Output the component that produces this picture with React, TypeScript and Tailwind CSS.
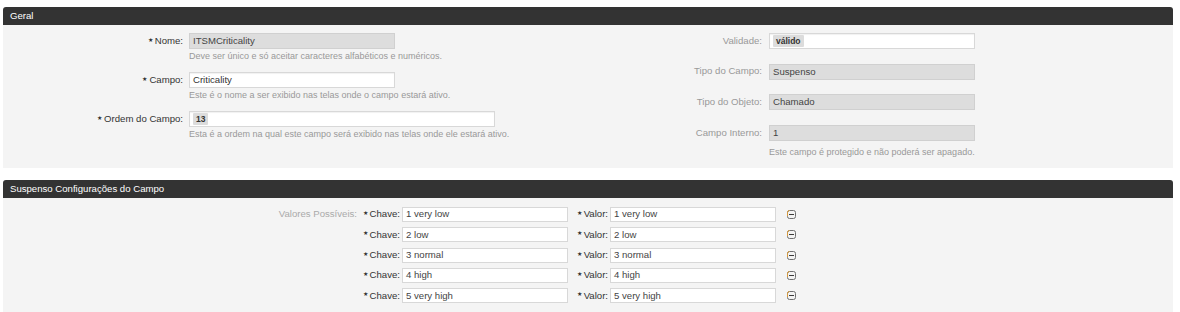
import { ReactNode } from 'react';

const rows = [
  ['1 very low', '1 very low'],
  ['2 low', '2 low'],
  ['3 normal', '3 normal'],
  ['4 high', '4 high'],
  ['5 very high', '5 very high'],
];

function Star() {
  return <span className="text-[6px] mr-[2px] relative top-[-1px]">★</span>;
}

function Header({ title }: { title: string }) {
  return (
    <div className="h-[18px] bg-[#333333] rounded-t-[3px] px-[7px] text-[9.6px] leading-[18px] text-white">
      {title}
    </div>
  );
}

function Input({ children, width, disabled }: { children?: ReactNode; width: string; disabled?: boolean }) {
  return (
    <div
      className={`${width} h-[16px] border flex items-center px-[3px] text-[9.6px] ${
        disabled
          ? 'bg-[#dddddd] border-[#d0d0d0] text-[#444]'
          : 'bg-white border-[#d8d8d8] text-[#333] shadow-[inset_0_1px_1px_rgba(0,0,0,0.06)]'
      }`}
    >
      {children}
    </div>
  );
}

function Chip({ text }: { text: string }) {
  return (
    <span className="bg-[#dcdcdc] text-[#333] text-[8.5px] font-bold px-[3px] h-[12px] leading-[12px] rounded-[1px]">
      {text}
    </span>
  );
}

function RemoveIcon() {
  return (
    <svg width="9" height="9" viewBox="0 0 9 9">
      <rect x="0.5" y="0.5" width="8" height="8" rx="2" fill="#f2f2f2" stroke="#6f6f6f" />
      <path d="M0.5 6 V2.5 Q0.5 0.5 2.5 0.5" fill="none" stroke="#d99a3a" />
      <line x1="2" y1="4.5" x2="7" y2="4.5" stroke="#3a3a3a" strokeWidth="1" />
    </svg>
  );
}

function LeftField({ label, hint, children }: { label: string; hint: string; children: ReactNode }) {
  return (
    <div className="flex mb-[10px]">
      <div className="w-[180px] h-[16px] flex items-center justify-end text-[9.6px] text-[#333]">
        <Star />
        {label}
      </div>
      <div className="ml-[6px]">
        {children}
        <div className="mt-[2px] text-[9px] leading-[11px] text-[#999]">{hint}</div>
      </div>
    </div>
  );
}

function RightField({ label, children }: { label: string; children: ReactNode }) {
  return (
    <div className="flex">
      <div className="w-[179px] h-[16px] flex items-center justify-end text-[9.6px] text-[#999]">{label}</div>
      <div className="ml-[7px]">{children}</div>
    </div>
  );
}

export default function App() {
  return (
    <div className="w-[1180px] h-[312px] overflow-hidden bg-white pt-[7px] font-['Liberation_Sans',Arial,sans-serif]">
      <div className="ml-[3px] w-[1170px]">
        <Header title="Geral" />
        <div className="bg-[#f4f4f4] h-[143px] pt-[8px] flex">
          <div className="w-[580px]">
            <LeftField label="Nome:" hint="Deve ser único e só aceitar caracteres alfabéticos e numéricos.">
              <Input width="w-[206px]" disabled>
                ITSMCriticality
              </Input>
            </LeftField>
            <LeftField label="Campo:" hint="Este é o nome a ser exibido nas telas onde o campo estará ativo.">
              <Input width="w-[206px]">Criticality</Input>
            </LeftField>
            <LeftField label="Ordem do Campo:" hint="Esta é a ordem na qual este campo será exibido nas telas onde ele estará ativo.">
              <Input width="w-[306px]">
                <Chip text="13" />
              </Input>
            </LeftField>
          </div>
          <div className="flex-1 flex flex-col gap-[14.7px]">
            <RightField label="Validade:">
              <Input width="w-[206px]">
                <Chip text="válido" />
              </Input>
            </RightField>
            <RightField label="Tipo do Campo:">
              <Input width="w-[206px]" disabled>
                Suspenso
              </Input>
            </RightField>
            <RightField label="Tipo do Objeto:">
              <Input width="w-[206px]" disabled>
                Chamado
              </Input>
            </RightField>
            <RightField label="Campo Interno:">
              <Input width="w-[206px]" disabled>
                1
              </Input>
              <div className="mt-[6px] text-[9px] leading-[11px] text-[#999]">
                Este campo é protegido e não poderá ser apagado.
              </div>
            </RightField>
          </div>
        </div>

        <div className="mt-[12px]">
          <Header title="Suspenso Configurações do Campo" />
          <div className="bg-[#f4f4f4] h-[120px] pt-[9px] flex">
            <div className="w-[354px] h-[15px] flex items-center justify-end text-[9.6px] text-[#aaa]">
              Valores Possíveis:
            </div>
            <div className="ml-[5px] flex flex-col gap-[5.35px]">
              {rows.map(([key, value]) => (
                <div key={key} className="flex items-center h-[15px]">
                  <div className="w-[38px] flex items-center justify-end text-[9.6px] text-[#333]">
                    <Star />
                    Chave:
                  </div>
                  <div className="ml-[2px] w-[166px] h-[15px] bg-white border border-[#d8d8d8] px-[3px] flex items-center text-[9.6px] text-[#444]">
                    {key}
                  </div>
                  <div className="ml-[10px] w-[30px] flex items-center justify-end text-[9.6px] text-[#333]">
                    <Star />
                    Valor:
                  </div>
                  <div className="ml-[2px] w-[166px] h-[15px] bg-white border border-[#d8d8d8] px-[3px] flex items-center text-[9.6px] text-[#444]">
                    {value}
                  </div>
                  <div className="ml-[11px] flex items-center">
                    <RemoveIcon />
                  </div>
                </div>
              ))}
            </div>
          </div>
        </div>
      </div>
    </div>
  );
}
